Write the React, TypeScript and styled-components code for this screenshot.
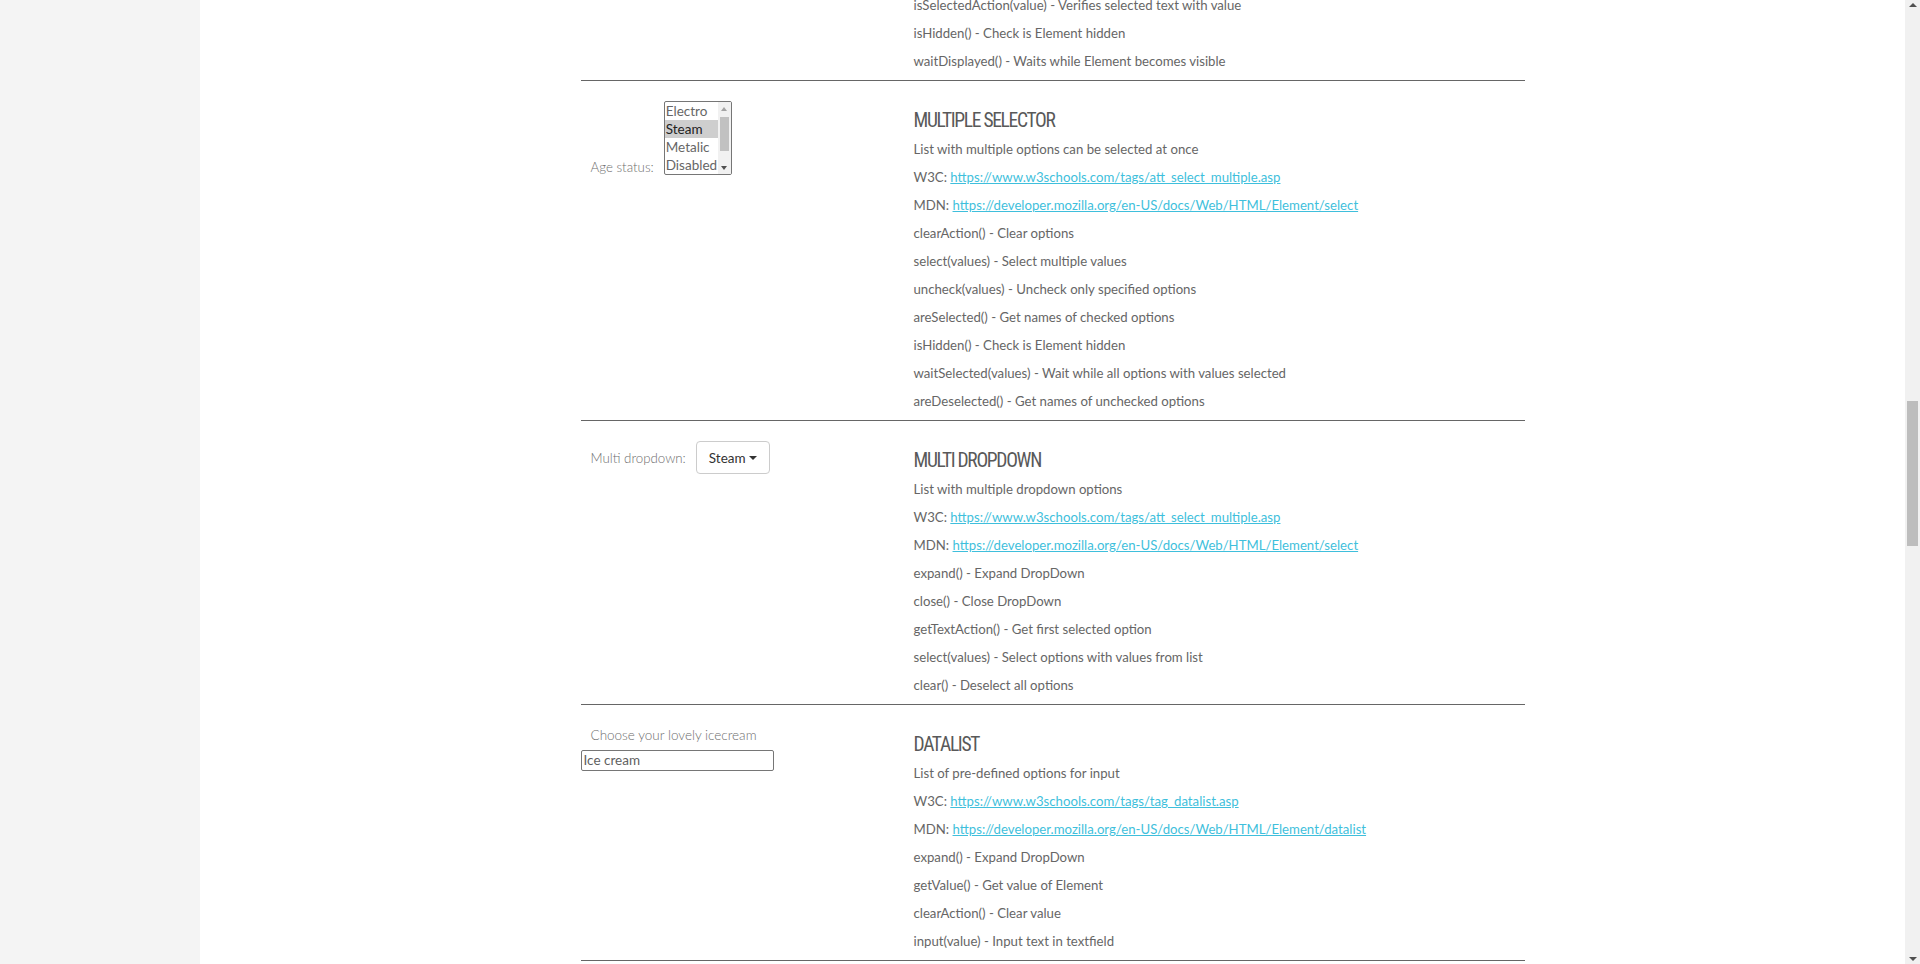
import React from "react";
import styled, { createGlobalStyle } from "styled-components";

const GlobalStyle = createGlobalStyle`
  html, body {
    margin: 0;
    padding: 0;
    height: 100%;
    overflow: hidden;
    background: #ffffff;
  }
  body {
    font-family: "Lato", "Liberation Sans", sans-serif;
  }
  #root {
    height: 100%;
  }
`;

const Page = styled.div`
  display: flex;
  width: 1920px;
  height: 964px;
`;

const Sidebar = styled.aside`
  flex: none;
  width: 200px;
  background: #f4f4f4;
`;

const Main = styled.main`
  flex: 1;
  display: flex;
  justify-content: center;
  overflow: hidden;
  background: #ffffff;
`;

const Content = styled.div<{ $scroll: number }>`
  width: 944px;
  margin-top: ${(p) => -p.$scroll}px;
`;

const Section = styled.section`
  display: grid;
  grid-template-columns: 333px 1fr;
  border-bottom: 1px solid #666666;
`;

const LeftCell = styled.div`
  padding-top: 20px;
`;

const RightCell = styled.div<{ $partial?: boolean }>`
  padding: ${(p) => (p.$partial ? "0 0 5px" : "27px 0 5px")};
`;

const Heading = styled.h3`
  margin: 0 0 1px;
  font-family: "Roboto Condensed", "Liberation Sans Narrow", sans-serif;
  font-weight: 400;
  font-size: 19.5px;
  line-height: 26px;
  letter-spacing: -1.3px;
  color: #595959;
  text-transform: uppercase;
`;

const Row = styled.p`
  margin: 0;
  font-size: 13.2px;
  line-height: 28px;
  color: #666666;
  white-space: nowrap;
`;

const Link = styled.a`
  color: #3fbfdc;
  text-decoration: underline;
`;

const FieldRow = styled.div<{ $align: "flex-end" | "baseline" }>`
  display: flex;
  align-items: ${(p) => p.$align};
  gap: 10px;
  padding-left: 10px;
`;

const FieldLabel = styled.label`
  font-size: 13.3px;
  font-weight: 300;
  line-height: 16px;
  color: #6e6e6e;
  white-space: nowrap;
`;

const ListBox = styled.div`
  box-sizing: border-box;
  width: 68px;
  height: 74px;
  display: flex;
  border: 1px solid #767676;
  border-radius: 2px;
  background: #ffffff;
  overflow: hidden;
`;

const OptionList = styled.ul`
  flex: 1;
  margin: 0;
  padding: 0;
  list-style: none;
  overflow: hidden;
`;

const Option = styled.li<{ $selected?: boolean }>`
  height: 18px;
  padding-left: 1px;
  font-size: 13.5px;
  line-height: 18px;
  white-space: nowrap;
  color: ${(p) => (p.$selected ? "#222222" : "#666666")};
  background: ${(p) => (p.$selected ? "#cecece" : "transparent")};
`;

const MiniScroll = styled.div`
  flex: none;
  width: 13px;
  display: flex;
  flex-direction: column;
  background: #f1f1f1;
`;

const MiniArrow = styled.div<{ $dir: "up" | "down"; $muted?: boolean }>`
  flex: none;
  height: 13px;
  display: flex;
  align-items: center;
  justify-content: center;
  &::before {
    content: "";
    width: 0;
    height: 0;
    border-left: 3.5px solid transparent;
    border-right: 3.5px solid transparent;
    ${(p) =>
      p.$dir === "up"
        ? `border-bottom: 4px solid ${p.$muted ? "#a3a3a3" : "#505050"};`
        : `border-top: 4px solid ${p.$muted ? "#a3a3a3" : "#505050"};`}
  }
`;

const MiniTrack = styled.div`
  flex: 1;
  padding: 0 2px;
`;

const MiniThumb = styled.div`
  margin-top: 2px;
  height: 34px;
  background: #c1c1c1;
`;

const DropdownButton = styled.button`
  box-sizing: border-box;
  height: 33px;
  display: inline-flex;
  align-items: center;
  gap: 3px;
  padding: 0 12px;
  border: 1px solid #cccccc;
  border-radius: 4px;
  background: #ffffff;
  font-family: inherit;
  font-size: 13.5px;
  color: #333333;
  cursor: pointer;
`;

const Caret = styled.span`
  width: 0;
  height: 0;
  border-top: 4px solid #333333;
  border-left: 4px solid transparent;
  border-right: 4px solid transparent;
`;

const DatalistLabel = styled.label`
  display: block;
  padding-left: 10px;
  margin-bottom: 4px;
  font-size: 13.5px;
  font-weight: 300;
  line-height: 20px;
  color: #6e6e6e;
`;

const DatalistInput = styled.input`
  box-sizing: border-box;
  width: 193px;
  height: 21px;
  margin: 0;
  padding: 0 2px;
  border: 1px solid #767676;
  border-radius: 2px;
  font-family: inherit;
  font-size: 13.5px;
  color: #333333;
  &::placeholder {
    color: #5f5f5f;
  }
`;

const PageScrollbar = styled.div`
  flex: none;
  width: 15px;
  display: flex;
  flex-direction: column;
  background: #f1f1f1;
`;

const PageArrow = styled.div<{ $dir: "up" | "down" }>`
  flex: none;
  height: 15px;
  display: flex;
  align-items: ${(p) => (p.$dir === "up" ? "flex-start" : "flex-end")};
  justify-content: center;
  padding: 3px 0;
  box-sizing: border-box;
  &::before {
    content: "";
    width: 0;
    height: 0;
    border-left: 4px solid transparent;
    border-right: 4px solid transparent;
    ${(p) => (p.$dir === "up" ? "border-bottom: 4px solid #505050;" : "border-top: 4px solid #505050;")}
  }
`;

const PageTrack = styled.div`
  flex: 1;
  padding: 0 2px;
`;

const PageThumb = styled.div<{ $offset: number; $size: number }>`
  margin-top: ${(p) => p.$offset}px;
  height: ${(p) => p.$size}px;
  background: #bdbdbd;
`;

type Line = string | { label: string; href: string };

const TextLines = ({ lines }: { lines: Line[] }) => (
  <>
    {lines.map((l, i) =>
      typeof l === "string" ? (
        <Row key={i}>{l}</Row>
      ) : (
        <Row key={i}>
          {l.label}: <Link href={l.href}>{l.href}</Link>
        </Row>
      )
    )}
  </>
);

const multiSelectLines: Line[] = [
  "List with multiple options can be selected at once",
  { label: "W3C", href: "https://www.w3schools.com/tags/att_select_multiple.asp" },
  { label: "MDN", href: "https://developer.mozilla.org/en-US/docs/Web/HTML/Element/select" },
  "clearAction() - Clear options",
  "select(values) - Select multiple values",
  "uncheck(values) - Uncheck only specified options",
  "areSelected() - Get names of checked options",
  "isHidden() - Check is Element hidden",
  "waitSelected(values) - Wait while all options with values selected",
  "areDeselected() - Get names of unchecked options",
];

const multiDropdownLines: Line[] = [
  "List with multiple dropdown options",
  { label: "W3C", href: "https://www.w3schools.com/tags/att_select_multiple.asp" },
  { label: "MDN", href: "https://developer.mozilla.org/en-US/docs/Web/HTML/Element/select" },
  "expand() - Expand DropDown",
  "close() - Close DropDown",
  "getTextAction() - Get first selected option",
  "select(values) - Select options with values from list",
  "clear() - Deselect all options",
];

const datalistLines: Line[] = [
  "List of pre-defined options for input",
  { label: "W3C", href: "https://www.w3schools.com/tags/tag_datalist.asp" },
  { label: "MDN", href: "https://developer.mozilla.org/en-US/docs/Web/HTML/Element/datalist" },
  "expand() - Expand DropDown",
  "getValue() - Get value of Element",
  "clearAction() - Clear value",
  "input(value) - Input text in textfield",
];

const previousLines: Line[] = [
  "isSelectedAction(value) - Verifies selected text with value",
  "isHidden() - Check is Element hidden",
  "waitDisplayed() - Waits while Element becomes visible",
];

const ageOptions = ["Electro", "Steam", "Metalic", "Disabled"];

export default function App() {
  return (
    <>
      <GlobalStyle />
      <Page>
        <Sidebar />
        <Main>
          <Content $scroll={9}>
            <Section>
              <div />
              <RightCell $partial>
                <TextLines lines={previousLines} />
              </RightCell>
            </Section>

            <Section>
              <LeftCell>
                <FieldRow $align="flex-end">
                  <FieldLabel>Age status:</FieldLabel>
                  <ListBox role="listbox" aria-multiselectable="true">
                    <OptionList>
                      {ageOptions.map((o) => (
                        <Option key={o} $selected={o === "Steam"}>
                          {o}
                        </Option>
                      ))}
                    </OptionList>
                    <MiniScroll>
                      <MiniArrow $dir="up" $muted />
                      <MiniTrack>
                        <MiniThumb />
                      </MiniTrack>
                      <MiniArrow $dir="down" />
                    </MiniScroll>
                  </ListBox>
                </FieldRow>
              </LeftCell>
              <RightCell>
                <Heading>Multiple Selector</Heading>
                <TextLines lines={multiSelectLines} />
              </RightCell>
            </Section>

            <Section>
              <LeftCell>
                <FieldRow $align="baseline">
                  <FieldLabel>Multi dropdown:</FieldLabel>
                  <DropdownButton type="button">
                    Steam
                    <Caret />
                  </DropdownButton>
                </FieldRow>
              </LeftCell>
              <RightCell>
                <Heading>Multi Dropdown</Heading>
                <TextLines lines={multiDropdownLines} />
              </RightCell>
            </Section>

            <Section>
              <LeftCell>
                <DatalistLabel htmlFor="ice-cream">Choose your lovely icecream</DatalistLabel>
                <DatalistInput id="ice-cream" list="ice-cream-flavors" placeholder="Ice cream" />
                <datalist id="ice-cream-flavors">
                  <option value="Chocolate" />
                  <option value="Coconut" />
                  <option value="Mint" />
                  <option value="Strawberry" />
                  <option value="Vanilla" />
                </datalist>
              </LeftCell>
              <RightCell>
                <Heading>Datalist</Heading>
                <TextLines lines={datalistLines} />
              </RightCell>
            </Section>
          </Content>
        </Main>
        <PageScrollbar>
          <PageArrow $dir="up" />
          <PageTrack>
            <PageThumb $offset={386} $size={145} />
          </PageTrack>
          <PageArrow $dir="down" />
        </PageScrollbar>
      </Page>
    </>
  );
}
